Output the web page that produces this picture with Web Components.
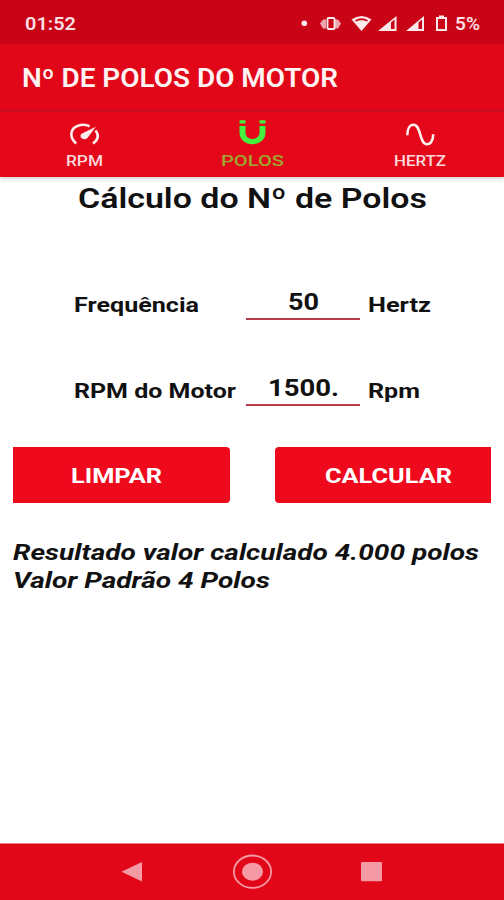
<!DOCTYPE html>
<html lang="pt-BR">
<head>
<meta charset="utf-8">
<title>Nº de Polos do Motor</title>
<style>
  body {
    margin: 0;
    background: #fff;
    font-family: Roboto, "Liberation Sans", sans-serif;
  }
</style>
</head>
<body>
<motor-app></motor-app>

<script>
// one line of text stretched to a given width
class FitText extends HTMLElement {
  constructor() {
    super()
    this.attachShadow({ mode: 'open' }).innerHTML = /*html*/`
      <style>
        :host { display: block; flex: none; white-space: nowrap; }
        span { display: inline-block; transform-origin: 0 50%; }
      </style>
      <span><slot></slot></span>`
  }
  connectedCallback() {
    const width = parseFloat(this.getAttribute('width'))
    const size = parseFloat(this.getAttribute('size'))
    const span = this.shadowRoot.querySelector('span')
    this.style.width = width + 'px'
    this.style.fontSize = size + 'px'
    this.style.lineHeight = '28px'
    this.style.height = '28px'
    span.style.transform = `scaleX(${width / span.getBoundingClientRect().width})`
  }
}

class StatusBar extends HTMLElement {
  constructor() {
    super()
    this.attachShadow({ mode: 'open' }).innerHTML = /*html*/`
      <style>
        :host {
          display: flex;
          align-items: center;
          box-sizing: border-box;
          height: 44px;
          padding: 3px 24px 0 25px;
          background: #c80416;
          color: #fbdfe2;
          font-weight: 600;
        }
        svg { margin-left: auto; margin-right: 6px; }
      </style>
      <fit-text width="51" size="18">01:52</fit-text>
      <svg width="150" height="20" viewBox="300 13 150 20" fill="#fde9eb">
        <circle cx="305.300" cy="22.300" r="2.800"/>
        <path d="M321 22.500l3-4h3v9h-3zM342 22.500l-3-4h-3v9h3z" opacity=".7"/>
        <rect x="328.500" y="17" width="7" height="11" rx="1" fill="#c80416" stroke="#fde9eb" stroke-width="1.800"/>
        <path d="M352.500 18.500q10-7 20 0L362.500 30z"/>
        <path d="M356 19.200q6.500-4 13 0l-1 1.200q-5.500-2.500-11 0z" fill="#c80416"/>
        <path d="M379 30L397.500 15v15zM407 30L425 15v15z"/>
        <path d="M392 21.500l3.500-3V28H392zM419.500 21.500l3.500-3V28h-3.500z" fill="#c80416"/>
        <path d="M440 14.500h5V16h3v14h-11V16h3zM439 18v10h7V18z" fill-rule="evenodd"/>
      </svg>
      <fit-text width="25" size="18">5%</fit-text>`
  }
}

class AppBar extends HTMLElement {
  constructor() {
    super()
    this.attachShadow({ mode: 'open' }).innerHTML = /*html*/`
      <style>
        :host {
          display: flex;
          align-items: center;
          box-sizing: border-box;
          height: 68px;
          padding: 4px 0 0 22px;
          background: #e10719;
          border-bottom: 2px solid #d40617;
          color: #fff3f3;
          font-weight: 600;
        }
      </style>
      <fit-text width="316" size="25"><slot></slot></fit-text>`
  }
}

class TabItem extends HTMLElement {
  constructor() {
    super()
    this.attachShadow({ mode: 'open' }).innerHTML = /*html*/`
      <style>
        :host {
          display: flex;
          flex-direction: column;
          align-items: center;
          box-sizing: border-box;
          height: 65px;
          padding-top: 6px;
          color: #fbd9dc;
          font-weight: 500;
        }
        :host([active]) { color: #9da72f; }
        .label { margin-top: -1px; }
      </style>
      <slot name="icon"></slot>
      <div class="label"><slot></slot></div>`
  }
}

class NumberField extends HTMLElement {
  constructor() {
    super()
    this.attachShadow({ mode: 'open' }).innerHTML = /*html*/`
      <style>
        :host {
          display: grid;
          grid-template-columns: 172px 114px auto;
          align-items: end;
          height: 40px;
          padding-left: 74px;
          color: #111;
          font-weight: 700;
        }
        .value {
          display: flex;
          justify-content: center;
          padding-bottom: 2px;
          border-bottom: 2px solid #b53b4b;
        }
        .unit { padding-left: 8px; }
        .label, .unit { padding-bottom: 1px; }
      </style>
      <div class="label"><slot name="label"></slot></div>
      <div class="value"><slot></slot></div>
      <div class="unit"><slot name="unit"></slot></div>`
  }
}

class RedButton extends HTMLElement {
  constructor() {
    super()
    this.attachShadow({ mode: 'open' }).innerHTML = /*html*/`
      <style>
        :host { display: block; }
        button {
          display: flex;
          align-items: center;
          box-sizing: border-box;
          width: 100%;
          height: 56px;
          border: none;
          padding: 2px 0 0 var(--text-start, 0);
          border-radius: var(--corners, 0);
          background: #ef091d;
          color: #fff;
          font: inherit;
          font-weight: 700;
          text-align: left;
        }
      </style>
      <button><slot></slot></button>`
  }
}

class NavBar extends HTMLElement {
  constructor() {
    super()
    this.attachShadow({ mode: 'open' }).innerHTML = /*html*/`
      <style>
        :host {
          display: block;
          height: 56px;
          border-top: 1px solid #df7d84;
          background: #e10719;
        }
        svg { display: block; }
      </style>
      <svg width="504" height="56" viewBox="0 844 504 56" fill="#f59aa4">
        <path d="M121.500 871.700L142 862v19.500z"/>
        <ellipse cx="252.500" cy="871.700" rx="18.600" ry="16.200" fill="none" stroke="#f59aa4" stroke-width="1.800"/>
        <ellipse cx="252.500" cy="871.700" rx="10.500" ry="9"/>
        <rect x="361" y="862" width="21" height="19.300" rx="1"/>
      </svg>`
  }
}

class MotorApp extends HTMLElement {
  constructor() {
    super()
    this.attachShadow({ mode: 'open' }).innerHTML = /*html*/`
      <style>
        :host {
          display: flex;
          flex-direction: column;
          width: 504px;
          height: 900px;
          overflow: hidden;
        }
        .tabs {
          display: grid;
          grid-template-columns: repeat(3, 1fr);
          background: #e30719;
          box-shadow: 0 1px 5px rgba(90, 110, 90, 0.4);
        }
        main { flex: 1; }
        .heading {
          display: flex;
          justify-content: center;
          margin: 0;
          padding: 8px 0 0 1px;
          color: #111;
          font-weight: 600;
        }
        .fields {
          display: grid;
          gap: 46px;
          margin-top: 67px;
        }
        .buttons {
          display: grid;
          grid-template-columns: 217px 216px;
          gap: 45px;
          margin: 41px 0 0 13px;
        }
        .clear { --corners: 0 4px 4px 0; --text-start: 58px; }
        .calc { --corners: 4px 0 0 4px; --text-start: 50px; }
        .result {
          margin: 35px 0 0 13px;
          color: #111;
          font-weight: 700;
          font-style: italic;
        }
      </style>
      <status-bar></status-bar>
      <app-bar>Nº DE POLOS DO MOTOR</app-bar>
      <nav class="tabs">
        <tab-item>
          <svg slot="icon" width="34" height="30" viewBox="67 118 34 30" fill="none" stroke="#fff0f0" stroke-width="2.600">
            <path d="M76.200 143.500C69 137.500 70 128.500 78 125.800C82 124.300 86 124.600 89.500 126.200M95.500 130.500C99.200 134.800 98.300 140 93 143.500"/>
            <path d="M95.800 126.700L87.800 137.600C85.500 140.800 79.500 138.500 80.600 135.200C81 133.800 82.500 133.300 83.600 132.800z" fill="#fff0f0" stroke="none"/>
          </svg>
          <fit-text width="37" size="15">RPM</fit-text>
        </tab-item>
        <tab-item active>
          <svg slot="icon" width="34" height="30" viewBox="235 118 34 30" fill="#43f03d">
            <path d="M239.500 120.200h6v3.300h-6zM259.500 120.200h6v3.300h-6z"/>
            <path d="M239.500 126h6v6.500c0 8.700 14 8.700 14 0V126h6v6.500c0 15.500-26 15.500-26 0z"/>
          </svg>
          <fit-text width="63" size="15">POLOS</fit-text>
        </tab-item>
        <tab-item>
          <svg slot="icon" width="34" height="30" viewBox="403.500 118 34 30" fill="none" stroke="#fff0f0" stroke-width="2.600">
            <path d="M407.800 135.200C407.800 128.500 410.500 124.700 414 124.700C422 124.700 419.500 144.300 427.500 144.300C431 144.300 433.700 140.500 433.700 134.200"/>
          </svg>
          <fit-text width="52" size="15">HERTZ</fit-text>
        </tab-item>
      </nav>
      <main>
        <h1 class="heading"><fit-text width="349" size="28">Cálculo do Nº de Polos</fit-text></h1>
        <div class="fields">
          <number-field>
            <fit-text slot="label" width="125" size="21">Frequência</fit-text>
            <fit-text width="31" size="24">50</fit-text>
            <fit-text slot="unit" width="63" size="21">Hertz</fit-text>
          </number-field>
          <number-field>
            <fit-text slot="label" width="162" size="21">RPM do Motor</fit-text>
            <fit-text width="71" size="24">1500.</fit-text>
            <fit-text slot="unit" width="52" size="21">Rpm</fit-text>
          </number-field>
        </div>
        <div class="buttons">
          <red-button class="clear"><fit-text width="91" size="21">LIMPAR</fit-text></red-button>
          <red-button class="calc"><fit-text width="127" size="21">CALCULAR</fit-text></red-button>
        </div>
        <div class="result">
          <fit-text width="466" size="22.5">Resultado valor calculado 4.000 polos</fit-text>
          <fit-text width="257" size="22.5">Valor Padrão 4 Polos</fit-text>
        </div>
      </main>
      <nav-bar></nav-bar>`
  }
}

window.customElements.define('status-bar', StatusBar)
window.customElements.define('app-bar', AppBar)
window.customElements.define('tab-item', TabItem)
window.customElements.define('number-field', NumberField)
window.customElements.define('red-button', RedButton)
window.customElements.define('nav-bar', NavBar)
window.customElements.define('motor-app', MotorApp)
// last, so that the texts are in place when they are measured
window.customElements.define('fit-text', FitText)
</script>
</body>
</html>
